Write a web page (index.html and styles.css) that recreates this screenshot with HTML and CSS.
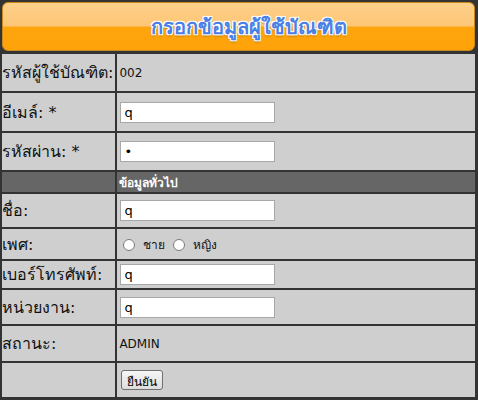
FILE: index.html
```html
<!DOCTYPE html>
<html lang="th">
<head>
    <meta charset="UTF-8">
    <title>กรอกข้อมูลผู้ใช้บัณฑิต</title>
    <link rel="stylesheet" href="styles.css">
</head>
<body>
    <div class="page">
        <div class="title-bar">
            <span class="title-text">กรอกข้อมูลผู้ใช้บัณฑิต</span>
        </div>
        <table class="form-table">
            <tr class="row-37">
                <td class="label">รหัสผู้ใช้บัณฑิต:</td>
                <td class="value">002</td>
            </tr>
            <tr class="row-38">
                <td class="label">อีเมล์: *</td>
                <td class="value"><input type="text" class="field" value="q"></td>
            </tr>
            <tr class="row-37">
                <td class="label">รหัสผ่าน: *</td>
                <td class="value"><input type="password" class="field" value="q"></td>
            </tr>
            <tr class="section">
                <td></td>
                <td>ข้อมูลทั่วไป</td>
            </tr>
            <tr class="row-33">
                <td class="label">ชื่อ:</td>
                <td class="value"><input type="text" class="field" value="q"></td>
            </tr>
            <tr class="row-30">
                <td class="label">เพศ:</td>
                <td class="value">
                    <label class="radio"><input type="radio" name="sex"> ชาย</label>
                    <label class="radio"><input type="radio" name="sex"> หญิง</label>
                </td>
            </tr>
            <tr class="row-27">
                <td class="label">เบอร์โทรศัพท์:</td>
                <td class="value"><input type="text" class="field" value="q"></td>
            </tr>
            <tr class="row-34">
                <td class="label">หน่วยงาน:</td>
                <td class="value"><input type="text" class="field" value="q"></td>
            </tr>
            <tr class="row-35">
                <td class="label">สถานะ:</td>
                <td class="value">ADMIN</td>
            </tr>
            <tr class="row-34">
                <td class="label"></td>
                <td class="value"><button class="submit-btn">ยืนยัน</button></td>
            </tr>
        </table>
    </div>
</body>
</html>
```

FILE: styles.css
```css
/* Reset */
* {
    box-sizing: border-box;
}

body {
    margin: 0;
    background: #333;
    font-family: Tahoma, "DejaVu Sans", sans-serif;
    color: #111;
}

.page {
    padding: 2px 1px 0 0;
}

/* Title bar */
.title-bar {
    height: 49px;
    margin: 0 2px 1px 2px;
    border-radius: 6px;
    border: 1px solid #c98a1a;
    background: linear-gradient(to bottom, #fed08a 0%, #fdc676 48%, #fea40c 52%, #fea30a 100%);
    display: flex;
    align-items: center;
    justify-content: center;
}

.title-text {
    font-size: 20px;
    font-weight: bold;
    color: #4a80e6;
    text-shadow: 1px 1px 0 #fff, -1px -1px 0 #fff, 1px -1px 0 #fff, -1px 1px 0 #fff, 0 2px 2px rgba(0, 0, 0, 0.3);
    padding-left: 20px;
}

/* Form table */
.form-table {
    width: 100%;
    border-spacing: 2px 2px;
    margin-top: 0;
}

.form-table td {
    background: #cfcfcf;
    padding: 0 2px;
    vertical-align: middle;
}

.label {
    width: 111px;
    font-size: 16px;
    white-space: nowrap;
    padding-left: 0 !important;
}

.value {
    font-size: 12px;
}

.row-38 td { height: 38px; }
.row-37 td { height: 37px; }
.row-35 td { height: 35px; }
.row-34 td { height: 34px; }
.row-33 td { height: 33px; }
.row-30 td { height: 30px; }
.row-27 td { height: 27px; }

/* Section header */
.section td {
    background: #666;
    color: #fff;
    font-size: 12px;
    font-weight: bold;
    height: 20px;
}

/* Inputs */
.field {
    width: 155px;
    height: 21px;
    margin: 0 0 0 1px;
    padding: 1px 3px;
    border: 1px solid #a8a8a8;
    background: #fff;
    font-family: Tahoma, "DejaVu Sans", sans-serif;
    font-size: 13px;
}

.radio {
    margin-left: 4px;
}

.radio input {
    width: 12px;
    height: 12px;
    margin: 0 4px 0 0;
    vertical-align: middle;
}

/* Button */
.submit-btn {
    margin-left: 2px;
    padding: 1px 5px;
    height: 20px;
    font-family: Tahoma, "DejaVu Sans", sans-serif;
    font-size: 12px;
    border: 1px solid #707070;
    border-radius: 3px;
    background: linear-gradient(to bottom, #f6f6f6, #dddddd);
}
```
